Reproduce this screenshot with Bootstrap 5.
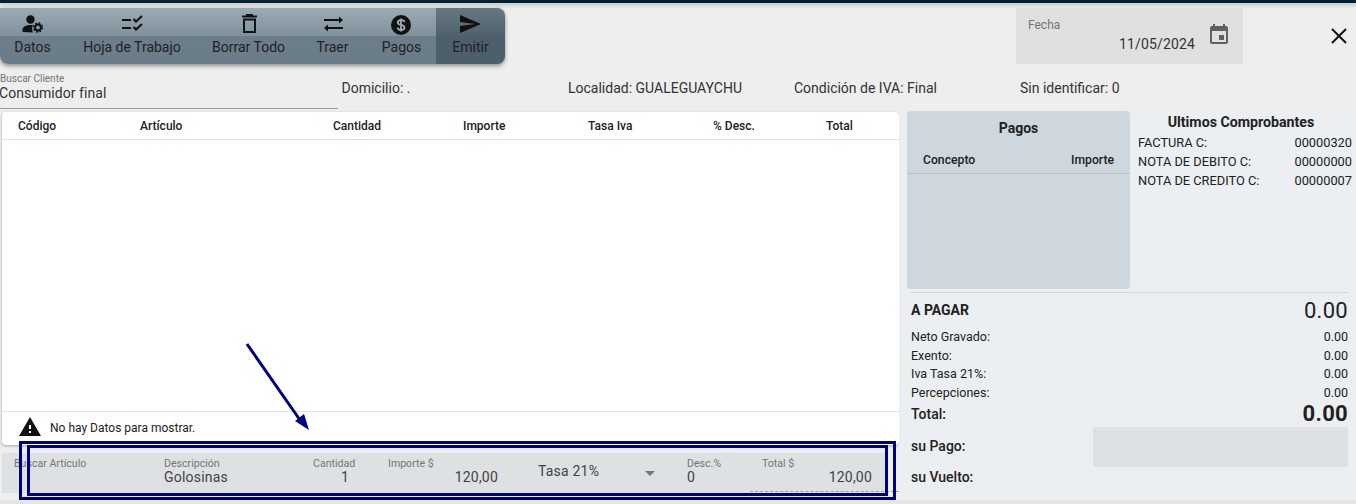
<!DOCTYPE html>
<html lang="es"><head><meta charset="utf-8"><title>Factura</title>
<link href="https://cdn.jsdelivr.net/npm/bootstrap@5.3.0/dist/css/bootstrap.min.css" rel="stylesheet">
<style>
html,body{height:504px;overflow:hidden}
body{background:#eee;font-family:Roboto,"Liberation Sans",sans-serif;font-size:14px;color:#212121;position:relative}
.topline{height:3px;background:#03212e;box-shadow:0 2px 4px rgba(0,0,0,.25)}
.headrow{height:62px;padding-top:5px}
.tbar{width:505px;height:56px;border-radius:0 8px 8px 8px;overflow:hidden;box-shadow:0 2px 4px rgba(0,0,0,.4);background:linear-gradient(#9babb5 0,#7f919b 50%,#6c7e89 50%,#6a7c87 100%)}
.tbtn{height:56px;text-align:center;color:#212121;line-height:1;position:relative;flex:none}
.tbtn svg{display:block;margin:3px auto 0;width:26px;height:26px}
.tbtn span{display:block;margin-top:0;font-size:14px;line-height:20px}
.t1{width:65px}.t2{width:134px}.t3{width:99px}.t4{width:69px}.t5{width:69px}
.t6{width:69px;background:linear-gradient(#66777f 0,#4f626c 50%,#4c5f6a 50%,#4c5f6a 100%)}
.fecha{width:227px;height:56px;margin-left:511px;background:#e0e0e0;padding:8px 12px;position:relative;color:#757575;font-size:12px}
.fval{position:absolute;right:48px;top:26px;font-size:14px;color:#333;line-height:20px;letter-spacing:.15px}
.cal{position:absolute;right:12px;top:15px;width:24px;height:24px}
.closex{margin-left:85px;margin-top:17px;width:22px;height:22px}
.inforow{height:47px;position:relative}
.cli{width:338px;height:44px;border-bottom:1px solid #9e9e9e;margin-right:3.500px;padding-top:8px}
.cli small{display:block;font-size:10px;color:#757575;line-height:11px}
.cli div{font-size:14px;line-height:16px;color:#333;margin-top:1px;margin-left:-1px;letter-spacing:.05px}
.info{font-size:14px;line-height:20px;color:#333;padding-top:13px}
.mainrow{height:389px}
.leftcol{width:899px}
.tablebox{height:333px;margin-left:2px;background:#fff;border-radius:4px;box-shadow:0 1px 3px rgba(0,0,0,.3);font-size:12px}
.thead-r{height:28px;border-bottom:1px solid #e0e0e0;font-weight:500;line-height:28px;color:#212121}
.thead-r div{flex:none}
.c1{width:138px;padding-left:16px}.c2{width:193px}.c3{width:130px}.c4{width:125px}.c5{width:125px}.c6{width:113px}
.tbody-r{height:271px}
.nodata{height:34px;border-top:1px solid #e0e0e0;padding-left:16px;line-height:32px}
.nodata svg{width:24px;height:24px;margin-right:8px;margin-top:3px}
.art{height:40px;margin-top:8px;margin-left:2px;background:#dee1e4;position:relative;color:#424242;width:886px}
.fld{flex:none;padding-top:4px}
.fld small{display:block;font-size:10.600px;line-height:13px;color:#757575}
.fld div{font-size:14px;line-height:16px;letter-spacing:.2px;color:#424242;height:16px;margin-top:-1px}
.f1{width:162px;padding-left:12px}.f2{width:149px}.f3{width:75px}.f4{width:110px}
.f5{width:189px;padding-top:10px;padding-left:40px;font-size:14px;letter-spacing:.2px;position:relative;line-height:16px}
.f6{width:75px}.f7{width:110px}
.tri{position:absolute;left:147px;top:18px;border:5px solid transparent;border-top:5px solid #757575;border-bottom:0}
.dash{position:absolute;left:748px;width:149px;top:38px;border-top:1px dashed #9e9e9e}
.cant{padding-left:28px}
.rightcol{width:457px;background:#ebeff2;position:relative;height:392px;margin-top:-1px}
.pagos{width:223px;height:178px;margin-left:8px;background:#cfd7de;border-radius:4px;font-size:12.200px}
.pagos h6{font-size:14px;font-weight:700;text-align:center;margin:0;padding-top:9px;line-height:17px;color:#212121}
.phead{margin-top:12px;padding:0 16px 0 16px;line-height:22px;font-weight:500;border-bottom:1px solid #b9c1c6;height:25px}
.ultimos{width:222px;padding-left:8px;font-size:12.800px;color:#212121}
.ultimos h6{font-size:14.200px;font-weight:700;text-align:center;margin:0;line-height:17px;padding:3px 8px 0 0}
.ultimos .l{line-height:19px;height:19px}
.ultimos h6 + .l{margin-top:2px}
.totbox{margin:3px 8px 0 12px;border-top:1px solid #d3d6d8;font-size:12.500px}
.apg{height:34px;align-items:center;font-weight:700;font-size:14px}
.apg .n{font-size:22px;font-weight:400;letter-spacing:.3px}
.lin{height:18.700px;line-height:18px}
.apg + .lin{margin-top:1px}
.tot{height:24px;line-height:22px;font-size:14px;font-weight:500}
.tot b{font-size:22px;line-height:22px;font-weight:700;letter-spacing:.3px}
.pg{font-size:14px;font-weight:500;line-height:16px;position:relative}
.pg > span{margin-top:-2px}
.pinp{width:255px;height:40px;background:#dee1e4;border-radius:2px}
.vuelto{margin-top:2px}
.overlay{position:absolute;left:0;top:0;pointer-events:none}
.bord1{position:absolute;left:19px;top:441px;width:877px;height:59px;border:3px solid #000080}
.bord2{position:absolute;left:27px;top:445px;width:861px;height:51px;border:3px solid #000080}
.foot{position:absolute;left:0;right:0;bottom:0;height:4px;background:#e6e6e6}
</style></head><body>
<div class="topline"></div>
<div class="headrow d-flex">
 <div class="tbar d-flex">
  <div class="tbtn t1"><svg viewBox="0 0 26 26"><circle cx="10.500" cy="8.500" r="4.200" fill="#111"/><path d="M2.500 21v-2.500c0-2.600 3.500-4.500 8-4.500 1 0 1.800.1 2.500.3-.7 1-1 2.300-1 3.500 0 1.200.3 2.400 1 3.700z" fill="#111"/><circle cx="18" cy="16.500" r="2.900" fill="none" stroke="#111" stroke-width="2"/><circle cx="18" cy="16.500" r="4.500" fill="none" stroke="#111" stroke-width="1.400" stroke-dasharray="1.900 1.630"/></svg><span>Datos</span></div>
  <div class="tbtn t2"><svg viewBox="0 0 26 26" fill="none" stroke="#111" stroke-width="2"><path d="M3 9h9M3 17h9M14.500 8l2.500 2.500L23 5M14.500 16l2.500 2.500L23 13"/></svg><span>Hoja de Trabajo</span></div>
  <div class="tbtn t3"><svg viewBox="0 0 26 26" fill="none" stroke="#111" stroke-width="2"><path d="M8 8.500h11V21H8zM6 5.500h15M10 4h7"/></svg><span>Borrar Todo</span></div>
  <div class="tbtn t4"><svg viewBox="0 0 26 26" fill="#111"><path d="M4 8h15V5.500L23 9l-4 3.500V10H4zM23 16H8v-2.500L4 17l4 3.500V18h15z"/></svg><span>Traer</span></div>
  <div class="tbtn t5"><svg viewBox="0 0 26 26"><circle cx="12" cy="14" r="10" fill="#111"/><path d="M15.500 11c-.3-1.300-1.500-2-3.500-2-1.900 0-3.300.9-3.300 2.400 0 3.300 6.800 1.800 6.800 5.100 0 1.500-1.500 2.500-3.500 2.500s-3.300-.9-3.500-2.300M12 7.500v13" fill="none" stroke="#9babb5" stroke-width="1.800"/></svg><span>Pagos</span></div>
  <div class="tbtn t6"><svg viewBox="0 0 26 26" fill="#111"><path d="M2 22L23 13 2 4v7l15 2-15 2z"/></svg><span>Emitir</span></div>
 </div>
 <div class="fecha">Fecha<div class="fval">11/05/2024</div><svg class="cal" viewBox="0 0 24 24" fill="#616161"><path d="M17 12h-5v5h5v-5zM16 1v2H8V1H6v2H5c-1.110 0-2 .9-2 2v14c0 1.100.89 2 2 2h14c1.100 0 2-.9 2-2V5c0-1.100-.9-2-2-2h-1V1h-2zm3 18H5V8h14v11z"/></svg></div>
 <svg class="closex" viewBox="0 0 22 22" stroke="#111" stroke-width="2" fill="none"><path d="M4 4l14 14M18 4L4 18"/></svg>
</div>
<div class="inforow d-flex">
 <div class="cli"><small>Buscar Cliente</small><div>Consumidor final</div></div>
 <div class="info" style="width:226.500px">Domicilio: .</div>
 <div class="info" style="width:226px">Localidad: GUALEGUAYCHU</div>
 <div class="info" style="width:226px">Condición de IVA: Final</div>
 <div class="info">Sin identificar: 0</div>
</div>
<div class="mainrow d-flex">
 <div class="leftcol">
  <div class="tablebox">
   <div class="thead-r d-flex"><div class="c1">Código</div><div class="c2">Artículo</div><div class="c3">Cantidad</div><div class="c4">Importe</div><div class="c5">Tasa Iva</div><div class="c6">% Desc.</div><div>Total</div></div>
   <div class="tbody-r"></div>
   <div class="nodata d-flex"><svg viewBox="0 0 24 24" fill="#111"><path d="M1 21h22L12 2 1 21zm12-3h-2v-2h2v2zm0-4h-2v-4h2v4z"/></svg>No hay Datos para mostrar.</div>
  </div>
  <div class="art d-flex">
   <div class="fld f1"><small>Buscar Artículo</small><div></div></div>
   <div class="fld f2"><small>Descripción</small><div>Golosinas</div></div>
   <div class="fld f3"><small>Cantidad</small><div class="cant">1</div></div>
   <div class="fld f4"><small>Importe $</small><div class="text-end">120,00</div></div>
   <div class="fld f5">Tasa 21%<i class="tri"></i></div>
   <div class="fld f6"><small>Desc.%</small><div>0</div></div>
   <div class="fld f7"><small>Total $</small><div class="text-end">120,00</div></div>
   <div class="dash"></div>
  </div>
 </div>
 <div class="rightcol">
  <div class="d-flex">
   <div class="pagos"><h6>Pagos</h6><div class="phead d-flex justify-content-between"><span>Concepto</span><span>Importe</span></div></div>
   <div class="ultimos"><h6>Ultimos Comprobantes</h6>
    <div class="l d-flex justify-content-between"><span>FACTURA C:</span><span>00000320</span></div>
    <div class="l d-flex justify-content-between"><span>NOTA DE DEBITO C:</span><span>00000000</span></div>
    <div class="l d-flex justify-content-between"><span>NOTA DE CREDITO C:</span><span>00000007</span></div>
   </div>
  </div>
  <div class="totbox">
   <div class="apg d-flex justify-content-between"><span>A PAGAR</span><span class="n">0.00</span></div>
   <div class="lin d-flex justify-content-between"><span>Neto Gravado:</span><span>0.00</span></div>
   <div class="lin d-flex justify-content-between"><span>Exento:</span><span>0.00</span></div>
   <div class="lin d-flex justify-content-between"><span>Iva Tasa 21%:</span><span>0.00</span></div>
   <div class="lin d-flex justify-content-between"><span>Percepciones:</span><span>0.00</span></div>
   <div class="tot d-flex justify-content-between"><span>Total:</span><b>0.00</b></div>
   <div class="pg d-flex justify-content-between align-items-center"><span>su Pago:</span><div class="pinp"></div></div>
   <div class="pg vuelto">su Vuelto:</div>
  </div>
 </div>
</div>
<div class="foot"></div>
<div class="bord1"></div><div class="bord2"></div>
<svg class="overlay" width="1356" height="504"><path d="M247 344L300 420" stroke="#000080" stroke-width="3" fill="none"/><path d="M309 430L295 421 304 414z" fill="#000080"/></svg>
</body></html>
